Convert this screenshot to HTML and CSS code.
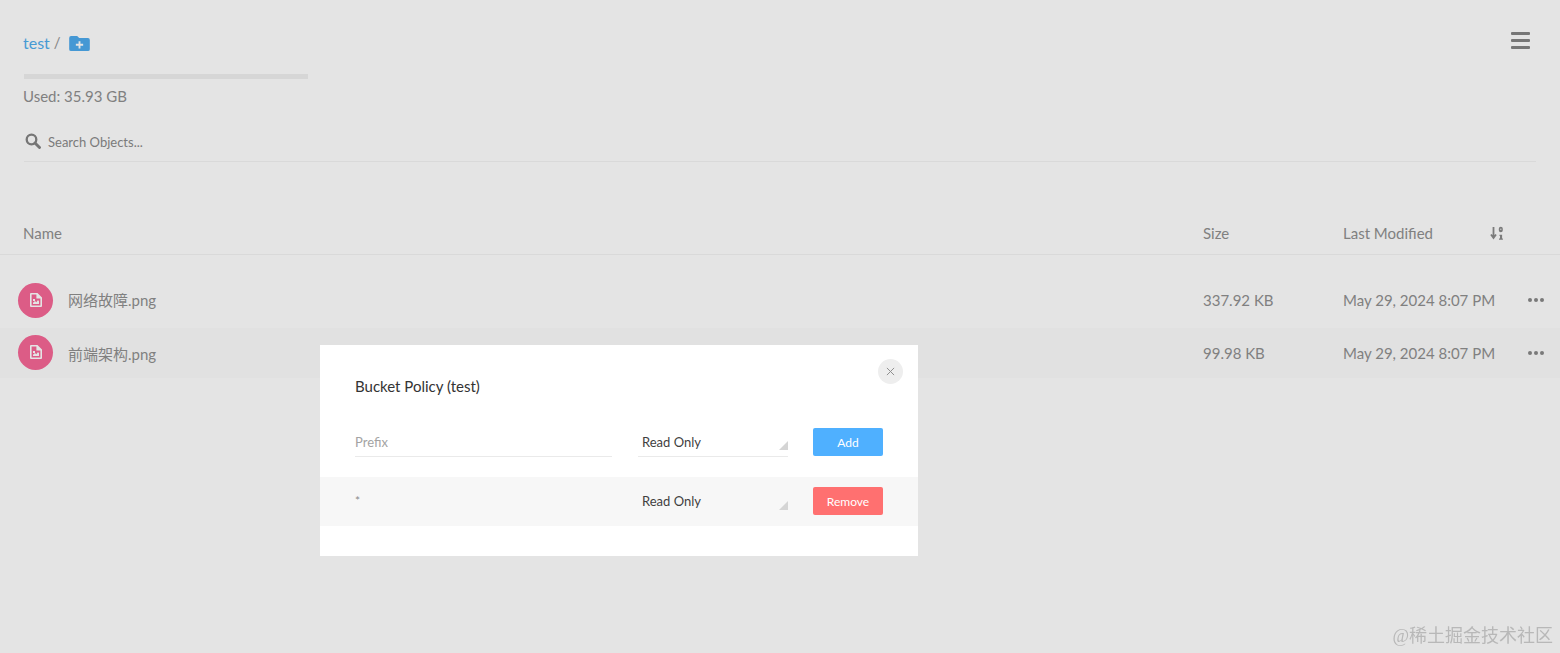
FILE: index.html
```html
<!DOCTYPE html>
<html lang="zh">
<head>
<meta charset="utf-8">
<title>Bucket Policy</title>
<link rel="stylesheet" href="styles.css">
</head>
<body>
<main class="page">
  <header class="top">
    <div class="top-left">
      <div class="crumbs">
        <a class="crumb-link">test</a><span class="crumb-sep">/</span>
        <svg class="folder-icon" viewBox="0 0 22 16"><path d="M2 0h6.500l2.200 2.200H20a2 2 0 0 1 2 2V14a2 2 0 0 1-2 2H2a2 2 0 0 1-2-2V2a2 2 0 0 1 2-2z" fill="#4eaaee"/><path d="M10 5.500h2v2.800h2.900v2H12v2.900h-2v-2.900H7.100v-2H10z" fill="#ffffff"/></svg>
      </div>
      <div class="usage-bar"></div>
      <div class="usage-text">Used: 35.93 GB</div>
    </div>
    <button class="menu-btn" aria-label="Menu"><span></span><span></span><span></span></button>
  </header>

  <div class="search">
    <svg class="search-icon" viewBox="0 0 16 16"><circle cx="6.500" cy="6.500" r="4.800" fill="none" stroke="#848484" stroke-width="2.300"/><path d="M10 10l4.500 4.500" stroke="#848484" stroke-width="2.900" stroke-linecap="round"/></svg>
    <span class="search-text">Search Objects...</span>
  </div>

  <div class="thead">
    <div class="col-name">Name</div>
    <div class="col-size">Size</div>
    <div class="col-date">Last Modified</div>
    <svg class="sort-icon" viewBox="0 0 14 14"><path d="M3.500 1v10M1 8.500l2.500 3.500L6 8.500" fill="none" stroke="#8a8a8a" stroke-width="1.800"/><path fill-rule="evenodd" d="M8.800 2.800a2 2 0 1 1 4 0v1.500a2 2 0 0 1-2 2 2 2 0 0 1-2-2zM10.200 2.800v1h1.200v-1zM9.500 8.800h2.600v3.700h.8v1.300H9v-1.300h1V10.100h-.5z" fill="#8a8a8a"/></svg>
  </div>

  <div class="rows">
    <div class="row">
      <div class="col-name name-cell">
        <span class="file-badge"><svg class="file-icon" viewBox="0 0 12 14"><path fill-rule="evenodd" d="M1 0h6.500L12 4.500V13a1 1 0 0 1-1 1H1a1 1 0 0 1-1-1V1a1 1 0 0 1 1-1zM1.600 1.600v10.800h8.800V5.600H6.400V1.600zM3 6h2v2H3zM3 11V9.800l2-1.800 1.300 1.200L8 7l1 1.200V11z" fill="#ffffff"/></svg></span>
        <span class="file-name">网络故障.png</span>
      </div>
      <div class="col-size">337.92 KB</div>
      <div class="col-date">May 29, 2024 8:07 PM</div>
      <div class="more"><i></i><i></i><i></i></div>
    </div>
    <div class="row row-hover">
      <div class="col-name name-cell">
        <span class="file-badge"><svg class="file-icon" viewBox="0 0 12 14"><path fill-rule="evenodd" d="M1 0h6.500L12 4.500V13a1 1 0 0 1-1 1H1a1 1 0 0 1-1-1V1a1 1 0 0 1 1-1zM1.600 1.600v10.800h8.800V5.600H6.400V1.600zM3 6h2v2H3zM3 11V9.800l2-1.800 1.300 1.200L8 7l1 1.200V11z" fill="#ffffff"/></svg></span>
        <span class="file-name">前端架构.png</span>
      </div>
      <div class="col-size">99.98 KB</div>
      <div class="col-date">May 29, 2024 8:07 PM</div>
      <div class="more"><i></i><i></i><i></i></div>
    </div>
  </div>
</main>

<div class="backdrop"></div>

<section class="modal">
  <button class="close" aria-label="Close"><svg viewBox="0 0 10 10"><path d="M1 1l8 8M9 1l-8 8" stroke="#8f8f8f" stroke-width="1.100"/></svg></button>
  <h2 class="modal-title">Bucket Policy (test)</h2>
  <div class="policy policy-new">
    <div class="prefix prefix-input">Prefix</div>
    <div class="select">Read Only</div>
    <button class="btn btn-add">Add</button>
  </div>
  <div class="policy policy-item">
    <div class="prefix prefix-value">*</div>
    <div class="select select-plain">Read Only</div>
    <button class="btn btn-remove">Remove</button>
  </div>
</section>

<div class="watermark">@稀土掘金技术社区</div>
</body>
</html>
```

FILE: styles.css
```css
* { box-sizing: border-box; }
html, body { height: 100%; }
body {
  margin: 0;
  background: #fff;
  font-family: Lato, "Noto Sans CJK SC", sans-serif;
  font-size: 15px;
  color: #909090;
  overflow: hidden;
}
button { font-family: inherit; border: 0; padding: 0; }

.page { padding-top: 32px; }

.top {
  display: flex;
  justify-content: space-between;
  padding: 0 30px 0 23px;
}
.crumbs { display: flex; align-items: center; height: 22px; }
.crumb-link { color: #4fadee; font-size: 16px; padding-bottom: 2px; }
.crumb-sep { margin: 0 8px 2px 4px; color: #969696; }
.folder-icon { width: 21px; height: 15px; margin-top: 1px; }
.usage-bar { width: 284px; height: 5px; margin: 20px 0 0 1px; background: #f0f0f0; }
.usage-text { margin-top: 7px; line-height: 20px; }

.menu-btn { display: flex; flex-direction: column; gap: 4px; width: 19px; height: 17px; background: none; }
.menu-btn span { display: block; height: 3px; background: #848484; border-radius: 1px; }

.search {
  display: flex;
  align-items: center;
  height: 38px;
  margin: 18px 24px 0;
  padding: 0 0 1px 1px;
  border-bottom: 1px solid #f3f3f3;
}
.search-icon { width: 16px; height: 16px; margin-right: 7px; margin-top: -3px; }
.search-text { font-size: 13px; color: #8a8a8a; }

.thead, .row { display: flex; align-items: center; }
.thead {
  height: 41px;
  margin-top: 52px;
  padding: 0 0 2px 23px;
  border-bottom: 1px solid #f3f3f3;
  line-height: 20px;
}
.col-name { flex: 1; }
.col-size { width: 140px; }
.col-date { width: 147px; white-space: nowrap; }
.sort-icon { width: 14px; height: 14px; margin-right: 56px; }

.rows { padding-top: 20px; }
.row { height: 50px; padding-left: 18px; margin-bottom: 3px; }
.row .col-date { width: 185px; }
.row-hover { background: #fcfcfc; }
.row-hover .file-badge { margin-bottom: 2px; }
.name-cell { display: flex; align-items: center; }
.file-badge {
  display: flex;
  align-items: center;
  justify-content: center;
  width: 35px;
  height: 35px;
  border-radius: 50%;
  background: #f76796;
  margin-right: 15px;
}
.file-icon { width: 12px; height: 14px; }
.file-name { margin-top: -1px; }
.row-hover .file-name { margin-top: 0; }
.more { display: flex; gap: 2px; width: 32px; padding-left: 0; }
.more i { width: 4px; height: 4px; border-radius: 50%; background: #888888; }

.backdrop { position: fixed; inset: 0; background: rgba(0, 0, 0, 0.105); }

.modal {
  position: fixed;
  left: 320px;
  top: 345px;
  width: 598px;
  height: 211px;
  background: #fff;
  color: #3b3b3b;
  padding-top: 32px;
}
.close {
  position: absolute;
  right: 15px;
  top: 14px;
  width: 25px;
  height: 25px;
  border-radius: 50%;
  background: #eeeeee;
  display: flex;
  align-items: center;
  justify-content: center;
}
.close svg { width: 9px; height: 9px; }
.modal-title { margin: 0 0 0 35px; font-size: 15px; line-height: 18px; font-weight: 400; color: #333; }

.policy { display: flex; align-items: center; padding-left: 35px; }
.policy-new { margin-top: 31px; height: 32px; }
.policy-item { margin-top: 19px; height: 49px; background: #f7f7f7; }
.prefix { width: 257px; margin-right: 26px; font-size: 13px; line-height: 28px; height: 29px; }
.prefix-input { color: #a3a3a3; border-bottom: 1px solid #eaeaea; }
.prefix-value { border: 0; color: #8a8a8a; font-size: 12px; }
.select {
  position: relative;
  width: 150px;
  height: 29px;
  padding-left: 4px;
  margin-right: 25px;
  font-size: 13px;
  line-height: 28px;
  color: #3f3f3f;
  border-bottom: 1px solid #eaeaea;
}
.select::after {
  content: "";
  position: absolute;
  right: 0;
  bottom: 6px;
  width: 0;
  height: 0;
  border-style: solid;
  border-width: 0 0 9px 9px;
  border-color: transparent transparent #d5d5d5 transparent;
}
.select-plain { border-bottom: 0; }
.btn {
  width: 70px;
  height: 28px;
  border-radius: 2px;
  color: #fff;
  font-size: 12px;
  text-align: center;
}
.btn-add { background: #4fb0ff; }
.btn-remove { background: #ff7070; margin-top: -1px; }

.watermark {
  position: fixed;
  right: 7px;
  bottom: 5px;
  font-family: "Liberation Serif", "Noto Sans CJK SC", serif;
  font-size: 18px;
  line-height: 24px;
  color: #b8b8b8;
}
```
